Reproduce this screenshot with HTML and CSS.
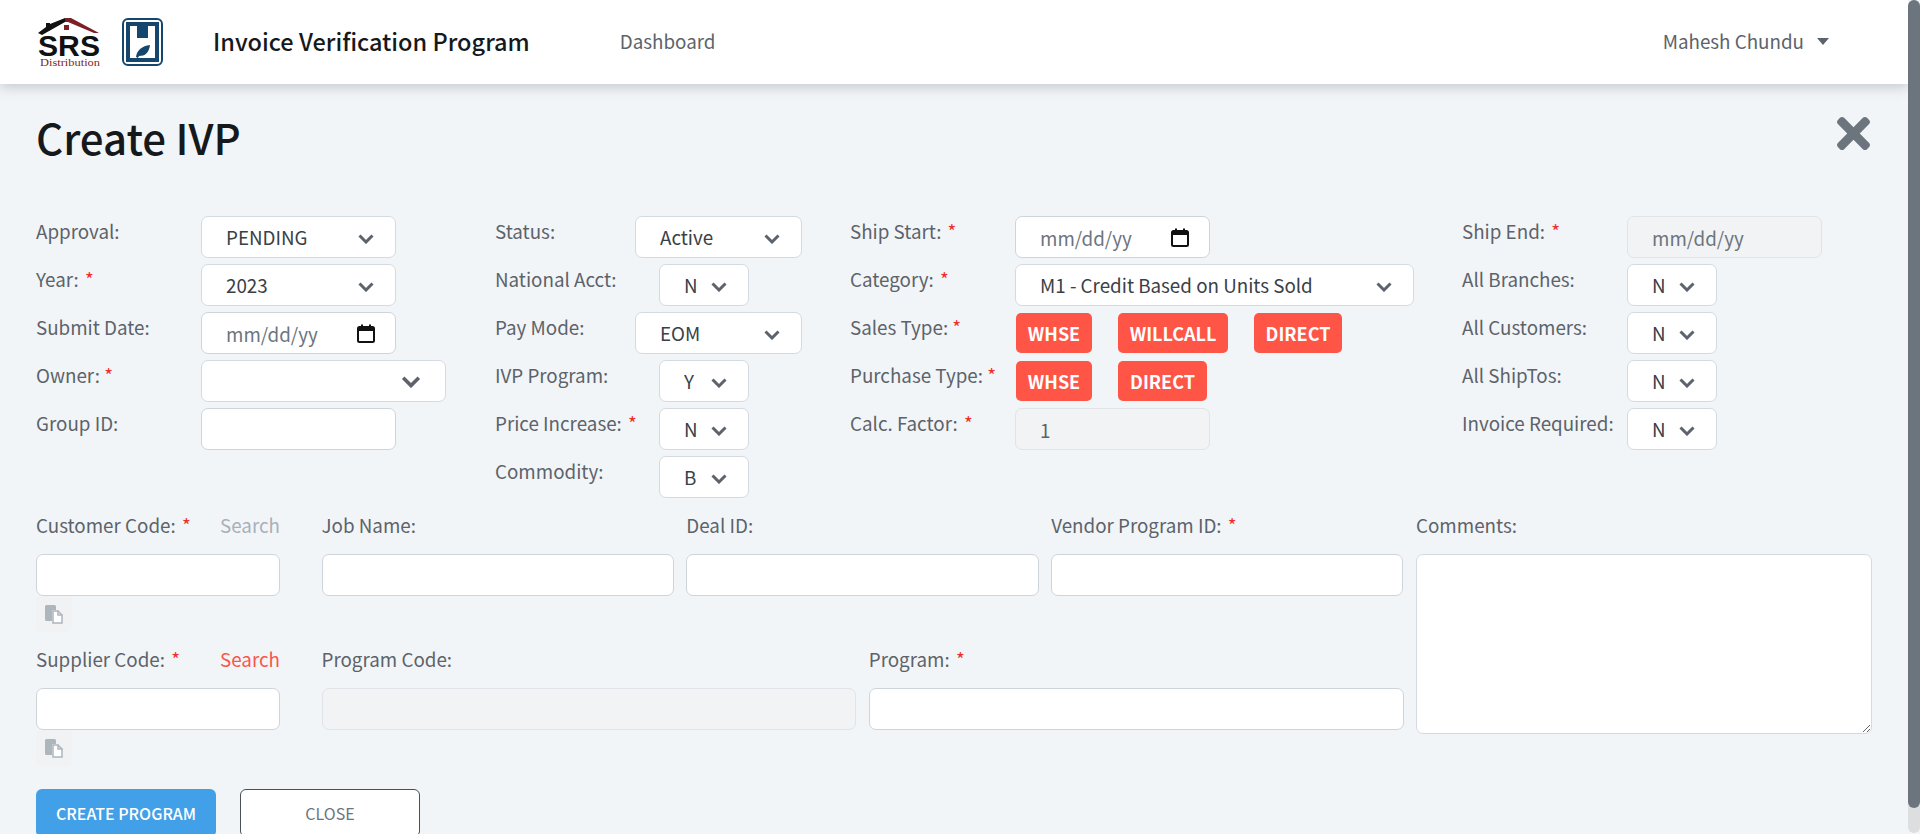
FILE: index.html
```html
<!DOCTYPE html>
<html>
<head>
<title>Invoice Verification Program</title>
<meta charset="utf-8">
<link rel="stylesheet" href="styles.css">
</head>
<body>
<div class="app">
  <div class="page">
    <nav class="navbar">
      <svg class="logo-srs" width="64" height="49" viewBox="0 0 64 49">
        <polygon points="0,15 8,9 8,5 12,5 12,6 27,0 27,4 4,17" fill="#111"/>
        <polygon points="27,0 33,0 61,15 56,15 30,4 27,4" fill="#7d1f27"/>
        <rect x="26" y="7" width="5" height="5" fill="#7d1f27"/>
        <text class="logo-srs-big" x="0" y="38" textLength="62" lengthAdjust="spacingAndGlyphs">SRS</text>
        <text class="logo-srs-small" x="2" y="48" textLength="60" lengthAdjust="spacingAndGlyphs">Distribution</text>
      </svg>
      <svg class="logo-h" width="41" height="48" viewBox="0 0 41 48">
        <rect x="1" y="1" width="39" height="46" rx="5" fill="#fff" stroke="#14466e" stroke-width="2"/>
        <rect x="6" y="6" width="29" height="36" fill="#fff" stroke="#14466e" stroke-width="4"/>
        <rect x="15" y="6" width="11" height="14" fill="#14466e"/>
        <path d="M14 39c1-7 6-11 14-12-1 8-5 11-11 11l-1 2z" fill="#14466e"/>
      </svg>
      <div class="brand">Invoice Verification Program</div>
      <a class="nav-link">Dashboard</a>
      <div class="nav-user">Mahesh Chundu<span class="caret"></span></div>
    </nav>

    <div class="content">
      <div class="title-row">
        <h1>Create IVP</h1>
        <svg class="close-x" width="33" height="33" viewBox="0 80 352 352"><path fill="#6c757d" d="M242.72 256l100.07-100.07c12.28-12.28 12.28-32.19 0-44.48l-22.24-22.24c-12.28-12.28-32.19-12.28-44.48 0L176 189.28 75.93 89.21c-12.28-12.28-32.19-12.28-44.48 0L9.21 111.45c-12.28 12.28-12.28 32.19 0 44.48L109.28 256 9.21 356.07c-12.28 12.28-12.28 32.19 0 44.48l22.24 22.24c12.28 12.28 32.2 12.28 44.48 0L176 322.72l100.07 100.07c12.28 12.28 32.2 12.28 44.48 0l22.24-22.24c12.28-12.28 12.28-32.19 0-44.48L242.72 256z"/></svg>
      </div>

      <div class="top-form">
        <div class="col col-1">
          <div class="field"><label>Approval:</label><select class="ctl"><option>PENDING</option></select></div>
          <div class="field"><label>Year: <i>*</i></label><select class="ctl"><option>2023</option></select></div>
          <div class="field"><label>Submit Date:</label><input class="ctl date" placeholder="mm/dd/yy"></div>
          <div class="field"><label>Owner: <i class="tight">*</i></label><select class="ctl wide"><option></option></select></div>
          <div class="field"><label>Group ID:</label><input class="ctl"></div>
        </div>
        <div class="col col-2">
          <div class="field"><label>Status:</label><select class="ctl mid"><option>Active</option></select></div>
          <div class="field"><label>National Acct:</label><select class="ctl small"><option>N</option></select></div>
          <div class="field"><label>Pay Mode:</label><select class="ctl mid"><option>EOM</option></select></div>
          <div class="field"><label>IVP Program:</label><select class="ctl small"><option>Y</option></select></div>
          <div class="field"><label>Price Increase: <i>*</i></label><select class="ctl small"><option>N</option></select></div>
          <div class="field"><label>Commodity:</label><select class="ctl small"><option>B</option></select></div>
        </div>
        <div class="col col-3">
          <div class="field"><label>Ship Start: <i>*</i></label><input class="ctl date" placeholder="mm/dd/yy"></div>
          <div class="field"><label>Category: <i>*</i></label><select class="ctl category"><option>M1 - Credit Based on Units Sold</option></select></div>
          <div class="field"><label>Sales Type: <i class="tight">*</i></label>
            <div class="tags"><button class="tag tag-whse">WHSE</button><button class="tag tag-will">WILLCALL</button><button class="tag tag-direct">DIRECT</button></div>
          </div>
          <div class="field"><label>Purchase Type: <i class="tight">*</i></label>
            <div class="tags"><button class="tag tag-whse">WHSE</button><button class="tag tag-direct2">DIRECT</button></div>
          </div>
          <div class="field"><label>Calc. Factor: <i>*</i></label><input class="ctl" value="1" disabled></div>
        </div>
        <div class="col col-4">
          <div class="field"><label>Ship End: <i>*</i></label><input class="ctl" placeholder="mm/dd/yy" disabled></div>
          <div class="field"><label>All Branches:</label><select class="ctl small"><option>N</option></select></div>
          <div class="field"><label>All Customers:</label><select class="ctl small"><option>N</option></select></div>
          <div class="field"><label>All ShipTos:</label><select class="ctl small"><option>N</option></select></div>
          <div class="field"><label>Invoice Required:</label><select class="ctl small"><option>N</option></select></div>
        </div>
      </div>

      <div class="lower-form">
        <div class="lower-left">
          <div class="lower-row">
            <div class="stack code">
              <div class="stack-label"><label>Customer Code: <i>*</i></label><a class="search off">Search</a></div>
              <input class="ctl">
              <span class="copy"><svg width="18" height="19" viewBox="0 0 18 19"><path d="M0 1.5A1.5 1.5 0 0 1 1.500 0h8A1.500 1.500 0 0 1 11 1.500V5H7v11H1.500A1.500 1.500 0 0 1 0 14.500z" fill="#adb5bd"/><path d="M8 6h5v4h4v8H8z" fill="#fff" stroke="#adb5bd" stroke-width="1.500"/><path d="M13 6l4 4" stroke="#adb5bd" stroke-width="1.500"/></svg></span>
            </div>
            <div class="stack grow"><div class="stack-label"><label>Job Name:</label></div><input class="ctl"></div>
            <div class="stack grow"><div class="stack-label"><label>Deal ID:</label></div><input class="ctl"></div>
            <div class="stack grow"><div class="stack-label"><label>Vendor Program ID: <i>*</i></label></div><input class="ctl"></div>
          </div>
          <div class="lower-row">
            <div class="stack code">
              <div class="stack-label"><label>Supplier Code: <i>*</i></label><a class="search">Search</a></div>
              <input class="ctl">
              <span class="copy"><svg width="18" height="19" viewBox="0 0 18 19"><path d="M0 1.5A1.5 1.5 0 0 1 1.500 0h8A1.500 1.500 0 0 1 11 1.500V5H7v11H1.500A1.500 1.500 0 0 1 0 14.500z" fill="#adb5bd"/><path d="M8 6h5v4h4v8H8z" fill="#fff" stroke="#adb5bd" stroke-width="1.500"/><path d="M13 6l4 4" stroke="#adb5bd" stroke-width="1.500"/></svg></span>
            </div>
            <div class="stack grow"><div class="stack-label"><label>Program Code:</label></div><input class="ctl" disabled></div>
            <div class="stack grow"><div class="stack-label"><label>Program: <i>*</i></label></div><input class="ctl"></div>
          </div>
        </div>
        <div class="stack comments">
          <div class="stack-label"><label>Comments:</label></div>
          <textarea class="ctl"></textarea>
        </div>
      </div>

      <div class="actions">
        <button class="btn btn-primary">CREATE PROGRAM</button>
        <button class="btn btn-outline">CLOSE</button>
      </div>
    </div>
  </div>
  <div class="scrollbar"><div class="thumb"></div></div>
</div>
</body>
</html>
```

FILE: styles.css
```css
*{
	box-sizing:border-box;
}
html,body{
	margin:0;
	height:100%;
	overflow:hidden;
}
body{
	background:#f2f5f8;
	color:#5c636a;
	font-family:"Noto Sans CJK SC","Noto Sans",sans-serif;
	font-size:18.8px;
	line-height:28px;
}
.app{
	display:flex;
	height:834px;
}
.page{
	flex:1;
	min-width:0;
	overflow:hidden;
}
.scrollbar{
	width:12px;
	height:833px;
	border-radius:6px;
	background:#dcdee0;
}
.thumb{
	height:808px;
	border-radius:6px;
	background:#6c757d;
}

/* navbar */
.navbar{
	display:flex;
	align-items:center;
	height:84px;
	padding-left:38px;
	padding-bottom:2px;
	background:#fff;
	box-shadow:0 3px 12px rgba(60,70,80,.26);
	position:relative;
}
.logo-srs{
	margin-top:3px;
}
.logo-srs-big{
	font-family:"Liberation Sans",sans-serif;
	font-weight:700;
	font-size:30px;
	fill:#111;
}
.logo-srs-small{
	font-family:"Liberation Serif",serif;
	font-size:11px;
	fill:#7d1f27;
}
.logo-h{
	margin-left:20px;
	margin-top:2px;
}
.brand{
	margin-left:50px;
	color:#16191c;
	font-size:23.500px;
	font-weight:500;
}
.nav-link{
	margin-left:90px;
}
.nav-user{
	display:flex;
	align-items:center;
	margin-left:auto;
	margin-right:79px;
}
.caret{
	margin-left:13px;
	border-top:7px solid #5c636a;
	border-left:6px solid transparent;
	border-right:6px solid transparent;
}

/* page body */
.content{
	padding:0 36px;
}
.title-row{
	display:flex;
	justify-content:space-between;
	align-items:center;
	height:132px;
	padding-bottom:26px;
}
h1{
	margin:0;
	color:#16191c;
	font-size:42px;
	font-weight:500;
	line-height:60px;
}
.close-x{
	margin-right:2px;
	margin-top:-8px;
}

.top-form{
	display:flex;
	height:296px;
}
.col{
	display:flex;
	flex-direction:column;
	gap:6px;
}
.col-1{
	width:459px;
}
.col-2{
	width:355px;
}
.col-3{
	width:612px;
}
.field{
	display:flex;
	height:42px;
}
.field label{
	width:165px;
	flex:none;
	height:30px;
	line-height:30px;
	white-space:nowrap;
}
.col-2 .field label{
	width:140px;
}
.col-2 .small{
	margin-left:24px;
}
label i{
	color:#ee2d2d;
	font-style:normal;
	margin-left:2px;
}
label i.tight{
	margin-left:0;
}

.ctl{
	display:block;
	width:195px;
	height:42px;
	padding:0 24px;
	border:1px solid #d5dae1;
	border-radius:7px;
	background:#fff;
	color:#3b4046;
	font-family:inherit;
	font-size:18.800px;
	outline:none;
}
input.ctl{
	border-color:#ced4da;
}
.ctl::placeholder{
	color:#6c757d;
	opacity:1;
}
.ctl:disabled{
	background:#f1f3f5;
	border-color:#e0e3e7;
	color:#5c636a;
}
select.ctl{
	appearance:none;
	-webkit-appearance:none;
	padding-bottom:1px;
	background:#fff url("data:image/svg+xml,%3Csvg xmlns='http://www.w3.org/2000/svg' viewBox='0 0 16 10'%3E%3Cpath d='M1.500 1.500L8 8l6.500-6.500' fill='none' stroke='%235c636a' stroke-width='3'/%3E%3C/svg%3E") no-repeat right 21px top 17px / 16px 10px;
}
.ctl.small{
	width:90px;
}
.ctl.mid{
	width:167px;
}
select.ctl.wide{
	width:245px;
	background-size:20px 12px;
	background-position:right 24px top 15px;
}
.ctl.category{
	width:399px;
}
.ctl.date{
	background:#fff url("data:image/svg+xml,%3Csvg xmlns='http://www.w3.org/2000/svg' viewBox='0 0 18 19'%3E%3Crect x='1' y='3' width='16' height='15' rx='1.500' fill='none' stroke='%23111' stroke-width='2'/%3E%3Crect x='1' y='3' width='16' height='4' fill='%23111'/%3E%3Crect x='4' y='0.500' width='2' height='3' fill='%23111'/%3E%3Crect x='12' y='0.500' width='2' height='3' fill='%23111'/%3E%3C/svg%3E") no-repeat right 20px center / 18px 19px;
}

.tags{
	display:flex;
	gap:26px;
	margin-left:1px;
	padding-top:1px;
}
.tag{
	height:40px;
	padding:0;
	border:none;
	border-radius:5px;
	background:#ff5546;
	color:#fff;
	font-family:inherit;
	font-size:18px;
	font-weight:700;
}
.tag-whse{
	width:76px;
}
.tag-will{
	width:110px;
}
.tag-direct{
	width:88px;
}
.tag-direct2{
	width:89px;
}

/* lower part */
.lower-form{
	display:flex;
	gap:12.500px;
}
.lower-left{
	width:1367.500px;
	flex:none;
}
.lower-row{
	display:flex;
	gap:12.500px;
	height:134px;
}
.stack{
	display:flex;
	flex-direction:column;
	align-items:flex-start;
}
.stack .ctl{
	width:100%;
}
.stack.grow{
	flex:1;
	min-width:0;
}
.stack.code{
	width:244px;
	flex:none;
	margin-right:29px;
}
.stack-label{
	display:flex;
	justify-content:space-between;
	width:100%;
	height:42px;
	margin-top:-1px;
	margin-bottom:1px;
}
.search{
	color:#f9564a;
}
.search.off{
	color:#a9b0b7;
}
.copy{
	display:flex;
	align-items:center;
	justify-content:center;
	width:36px;
	height:36px;
	border-radius:5px;
	background:#f0f2f4;
}
.comments{
	flex:1;
	min-width:0;
}
.comments textarea{
	height:180px;
	resize:both;
}

.actions{
	display:flex;
	gap:24px;
	margin-top:9px;
}
.btn{
	width:180px;
	height:48px;
	border-radius:6px;
	font-family:inherit;
	font-size:16px;
}
.btn-primary{
	border:none;
	background:#42a0e8;
	color:#fff;
	font-weight:500;
}
.btn-outline{
	border:1px solid #495057;
	background:#fff;
	color:#6c757d;
}
```
